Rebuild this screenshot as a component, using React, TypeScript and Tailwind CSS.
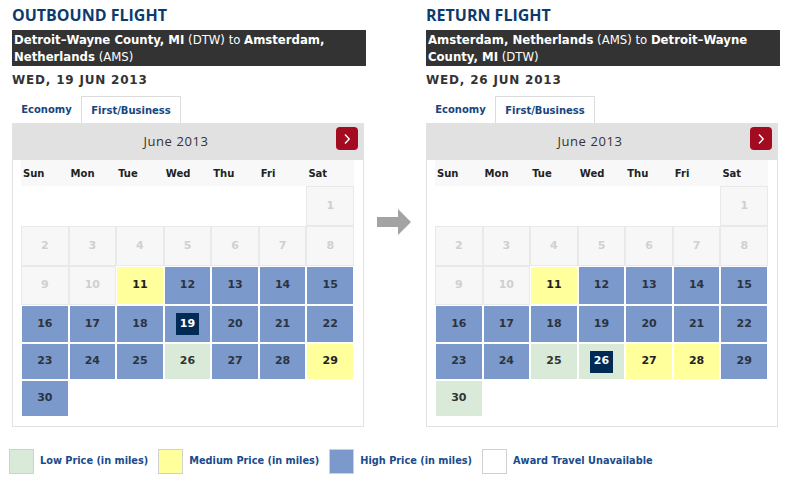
import React from "react";

type Kind = "none" | "dis" | "low" | "med" | "high";
type Cell = { d?: number; k: Kind; sel?: boolean };

const V = "font-['DejaVu_Sans',Verdana,sans-serif]";

function build(map: Record<number, Kind>, sel: number): Cell[][] {
  const rows: Cell[][] = [];
  const first: Cell[] = [];
  for (let i = 0; i < 6; i++) first.push({ k: "none" });
  first.push({ d: 1, k: map[1] });
  rows.push(first);
  let d = 2;
  while (d <= 30) {
    const r: Cell[] = [];
    for (let i = 0; i < 7; i++) {
      if (d <= 30) {
        r.push({ d, k: map[d], sel: d === sel });
        d++;
      } else r.push({ k: "none" });
    }
    rows.push(r);
  }
  return rows;
}

function mk(low: number[], med: number[]): Record<number, Kind> {
  const m: Record<number, Kind> = {};
  for (let i = 1; i <= 30; i++) {
    if (i <= 10) m[i] = "dis";
    else if (low.includes(i)) m[i] = "low";
    else if (med.includes(i)) m[i] = "med";
    else m[i] = "high";
  }
  return m;
}

const cls: Record<Kind, string> = {
  none: "border-white bg-white",
  dis: "border-[#e9e9e9] bg-[#f7f7f7] text-[#d0d0d0]",
  low: "border-white bg-[#d9ebd8] text-[#333]",
  med: "border-white bg-[#ffff9c] text-[#222]",
  high: "border-white bg-[#7b9acb] text-[#2c3340]",
};

const rowH = ["h-[40px]", "h-[40px]", "h-[39px]", "h-[38px]", "h-[37px]", "h-[37px]"];

function Calendar({ rows }: { rows: Cell[][] }) {
  const days = ["Sun", "Mon", "Tue", "Wed", "Thu", "Fri", "Sat"];
  return (
    <div className="w-[352px] border border-[#e2e2e2] bg-white">
      <div className="relative h-[36px] bg-[#e1e1e1] flex items-center justify-center pr-[24px]">
        <span className="font-['Open_Sans',sans-serif] text-[13px] tracking-[0.6px] text-[#333]">June 2013</span>
        <div className="absolute right-[5px] top-[3px] w-[22px] h-[23px] rounded-[4px] bg-[#a30c20] flex items-center justify-center">
          <svg width="8" height="12" viewBox="0 0 8 12">
            <path d="M2 1.5 L6.2 6 L2 10.5" fill="none" stroke="white" strokeWidth="1.4" />
          </svg>
        </div>
      </div>
      <div className="px-[8px] pb-[9px]">
        <div className={`grid grid-cols-7 w-[333px] h-[26px] bg-[#f8f8f8] items-center ${V} text-[10px] font-bold text-[#222]`}>
          {days.map((d) => (
            <div key={d} className="pl-[2px]">{d}</div>
          ))}
        </div>
        <div className="w-[333px]">
          {rows.map((r, ri) => (
            <div key={ri} className={`grid grid-cols-7 ${rowH[ri]}`}>
              {r.map((c, ci) => (
                <div
                  key={ci}
                  className={`border flex items-center justify-center ${V} text-[11px] font-bold ${cls[c.k]}`}
                >
                  {c.d !== undefined &&
                    (c.sel ? (
                      <span className="w-[23px] h-[22px] bg-[#012a55] text-white flex items-center justify-center">{c.d}</span>
                    ) : (
                      <span>{c.d}</span>
                    ))}
                </div>
              ))}
            </div>
          ))}
        </div>
      </div>
    </div>
  );
}

function Panel({
  title,
  route,
  date,
  rows,
}: {
  title: string;
  route: React.ReactNode;
  date: string;
  rows: Cell[][];
}) {
  return (
    <div className="w-[354px] flex flex-col">
      <div className="h-[30px] pt-[3px] font-['Open_Sans',sans-serif] font-bold text-[16px] leading-[24px] text-[#0d3a6c]">{title}</div>
      <div className="h-[36px] bg-[#333333] text-white font-['DejaVu_Sans_Condensed','DejaVu_Sans',sans-serif] font-stretch-semi-condensed text-[13px] leading-[17px] px-[2px] pt-[1px]">{route}</div>
      <div className={`h-[30px] pt-[6px] ${V} font-bold text-[12px] leading-[16px] tracking-[0.8px] text-[#333]`}>{date}</div>
      <div className={`flex items-end h-[27px] ${V} text-[10px] font-bold text-[#16457f]`}>
        <div className="w-[69px] h-[27px] flex items-center justify-center pb-[1px]">Economy</div>
        <div className="w-[100px] h-[27px] border border-b-0 border-[#dcdcdc] bg-white flex items-center justify-center pt-[1px]">First/Business</div>
      </div>
      <Calendar rows={rows} />
    </div>
  );
}

function Legend({ color, label }: { color: string; label: string }) {
  return (
    <div className="flex items-center">
      <div className={`w-[25px] h-[25px] border border-[#d0d0d0] ${color}`} />
      <span className={`ml-[6px] ${V} text-[9.75px] font-bold text-[#1a4b8c]`}>{label}</span>
    </div>
  );
}

export default function App() {
  const out = build(mk([26], [11, 29]), 19);
  const ret = build(mk([25, 26, 30], [11, 27, 28]), 26);
  return (
    <div className="w-[789px] h-[480px] bg-white relative overflow-hidden">
      <div className="flex pl-[12px]">
        <Panel
          title="OUTBOUND FLIGHT"
          route={
            <>
              <b>Detroit–Wayne County, MI</b> (DTW) to <b>Amsterdam, Netherlands</b> (AMS)
            </>
          }
          date="WED, 19 JUN 2013"
          rows={out}
        />
        <div className="w-[60px] flex justify-start pl-[10px] pt-[209px]">
          <svg width="36" height="27" viewBox="0 0 36 27">
            <path d="M1 8 H22 V0 L35 13 L22 26 V18 H1 Z" fill="#a3a3a3" />
          </svg>
        </div>
        <Panel
          title="RETURN FLIGHT"
          route={
            <>
              <b>Amsterdam, Netherlands</b> (AMS) to <b>Detroit–Wayne County, MI</b> (DTW)
            </>
          }
          date="WED, 26 JUN 2013"
          rows={ret}
        />
      </div>
      <div className="flex gap-[10px] pl-[9px] pt-[22px]">
        <Legend color="bg-[#d9ebd8]" label="Low Price (in miles)" />
        <Legend color="bg-[#ffff9c]" label="Medium Price (in miles)" />
        <Legend color="bg-[#7b9acb]" label="High Price (in miles)" />
        <Legend color="bg-white" label="Award Travel Unavailable" />
      </div>
    </div>
  );
}
